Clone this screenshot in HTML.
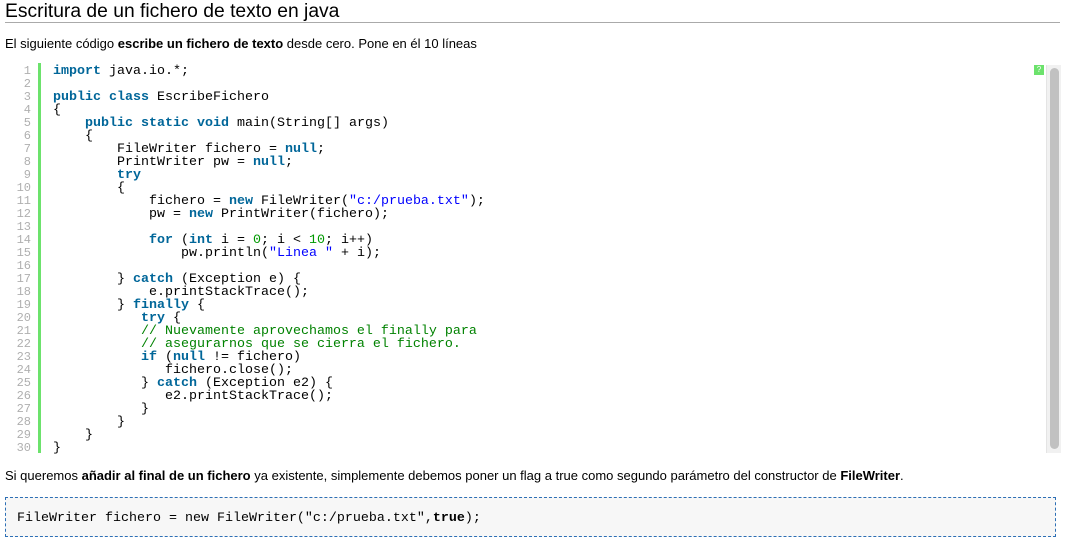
<!DOCTYPE html>
<html><head><meta charset="utf-8">
<style>
html,body{margin:0;padding:0;background:#fff;width:1068px;height:556px;overflow:hidden}
body{font-family:"Liberation Sans",sans-serif;color:#000;position:relative}
h1{position:absolute;left:5px;top:0;margin:0;font-weight:normal;font-size:19.3px;line-height:24px;width:1055px;border-bottom:1px solid #aaa;height:22px}
p{position:absolute;left:5px;margin:0;font-size:13px;line-height:16px}
.nums{position:absolute;left:0;top:65px;width:31px;text-align:right;font-family:"Liberation Mono",monospace;font-size:12px;line-height:13px;color:#afafaf;white-space:pre}
.bar{position:absolute;left:38px;top:63px;width:3px;height:390px;background:#6ce26c}
pre{margin:0}
.code{position:absolute;left:53px;top:65px;font-family:"Liberation Mono",monospace;font-size:13.33px;line-height:13px;color:#000;white-space:pre}
.k{color:#006699;font-weight:bold}
.s{color:#0000ff}
.n{color:#009900}
.c{color:#008200}
.q{position:absolute;left:1034px;top:65px;width:10px;height:10px;background:#6ce26c;color:#fff;font-size:8px;line-height:10px;text-align:center}
.sb{position:absolute;left:1046px;top:65px;width:14px;height:388px;background:#f1f1f1;border-left:1px solid #e4e4e4}
.th{position:absolute;left:3px;top:3px;width:9px;height:381px;background:#c1c1c1;border-radius:5px}
.box{position:absolute;left:5px;top:497px;width:1051px;height:40px;border:1px dashed #2d6fb5;background:#f7f7f7;box-sizing:border-box}
.box pre{position:absolute;left:11px;top:14px;font-family:"Liberation Mono",monospace;font-size:13.33px;line-height:13px}
</style></head><body>
<h1>Escritura de un fichero de texto en java</h1>
<p style="top:36px">El siguiente código <b>escribe un fichero de texto</b> desde cero. Pone en él 10 líneas</p>
<div class="nums">1
2
3
4
5
6
7
8
9
10
11
12
13
14
15
16
17
18
19
20
21
22
23
24
25
26
27
28
29
30</div>
<div class="bar"></div>
<pre class="code"><span class="k">import</span> java.io.*;

<span class="k">public</span> <span class="k">class</span> EscribeFichero
{
    <span class="k">public</span> <span class="k">static</span> <span class="k">void</span> main(String[] args)
    {
        FileWriter fichero = <span class="k">null</span>;
        PrintWriter pw = <span class="k">null</span>;
        <span class="k">try</span>
        {
            fichero = <span class="k">new</span> FileWriter(<span class="s">"c:/prueba.txt"</span>);
            pw = <span class="k">new</span> PrintWriter(fichero);

            <span class="k">for</span> (<span class="k">int</span> i = <span class="n">0</span>; i &lt; <span class="n">10</span>; i++)
                pw.println(<span class="s">"Linea "</span> + i);

        } <span class="k">catch</span> (Exception e) {
            e.printStackTrace();
        } <span class="k">finally</span> {
           <span class="k">try</span> {
           <span class="c">// Nuevamente aprovechamos el finally para</span>
           <span class="c">// asegurarnos que se cierra el fichero.</span>
           <span class="k">if</span> (<span class="k">null</span> != fichero)
              fichero.close();
           } <span class="k">catch</span> (Exception e2) {
              e2.printStackTrace();
           }
        }
    }
}</pre>
<div class="q">?</div>
<div class="sb"><div class="th"></div></div>
<p style="top:468px">Si queremos <b>añadir al final de un fichero</b> ya existente, simplemente debemos poner un flag a true como segundo parámetro del constructor de <b>FileWriter</b>.</p>
<div class="box"><pre>FileWriter fichero = new FileWriter("c:/prueba.txt",<b>true</b>);</pre></div>
</body></html>
